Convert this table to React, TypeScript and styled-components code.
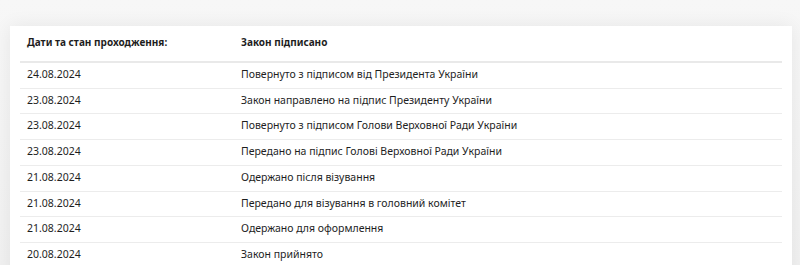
import React from 'react';
import styled, { createGlobalStyle } from 'styled-components';

const GlobalStyle = createGlobalStyle`
  html, body {
    margin: 0;
    padding: 0;
    background: #f4f4f4;
  }
  body {
    font-family: 'Noto Sans', 'Open Sans', sans-serif;
    color: #1e1e1e;
  }
`;

const Page = styled.div`
  padding: 26px 8px 0 10px;
  height: 265px;
  box-sizing: border-box;
  overflow: hidden;
  background: linear-gradient(#f7f7f7, #f1f1f1);
`;

const Card = styled.section`
  background: #fff;
  padding: 0 10px 10px;
  box-shadow: 0 0 18px rgba(0, 0, 0, 0.07);
`;

const Table = styled.table`
  width: 100%;
  border-collapse: collapse;
  font-size: 10.5px;
`;

const HeadCell = styled.th<{ $first?: boolean }>`
  text-align: left;
  font-weight: 700;
  font-size: 10px;
  padding: 9px 7px 12px;
  line-height: 14px;
  width: ${(p) => (p.$first ? '200px' : 'auto')};
  border-bottom: 2px solid #e9e9e9;
`;

const Row = styled.tr`
  border-bottom: 1px solid #ececec;
`;

const Cell = styled.td`
  padding: 4px 7px 5px;
  line-height: 15.7px;
`;

const stages = [
  ['24.08.2024', 'Повернуто з підписом від Президента України'],
  ['23.08.2024', 'Закон направлено на підпис Президенту України'],
  ['23.08.2024', 'Повернуто з підписом Голови Верховної Ради України'],
  ['23.08.2024', 'Передано на підпис Голові Верховної Ради України'],
  ['21.08.2024', 'Одержано після візування'],
  ['21.08.2024', 'Передано для візування в головний комітет'],
  ['21.08.2024', 'Одержано для оформлення'],
  ['20.08.2024', 'Закон прийнято'],
];

export default function App() {
  return (
    <Page>
      <GlobalStyle />
      <Card>
        <Table>
          <thead>
            <tr>
              <HeadCell $first>Дати та стан проходження:</HeadCell>
              <HeadCell>Закон підписано</HeadCell>
            </tr>
          </thead>
          <tbody>
            {stages.map(([date, text], i) => (
              <Row key={i}>
                <Cell>{date}</Cell>
                <Cell>{text}</Cell>
              </Row>
            ))}
          </tbody>
        </Table>
      </Card>
    </Page>
  );
}
